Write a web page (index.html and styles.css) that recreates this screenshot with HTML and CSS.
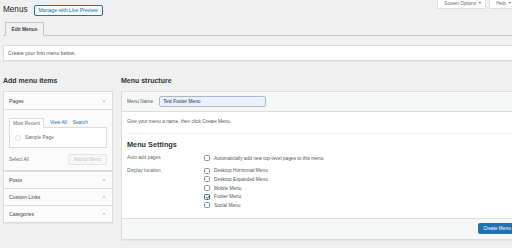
FILE: index.html
```html
<html>
  <head>
    <title>Menus</title>
    <link rel="stylesheet" href="styles.css">
  </head>

  <body>
    <div class="wrap">
      <div class="top">
        <div class="title-row">
          <h1>Menus</h1>
          <a class="btn-outline">Manage with Live Preview</a>
        </div>
        <div class="screen-meta">
          <span class="meta-tab">Screen Options <span class="caret"></span></span>
          <span class="meta-tab">Help <span class="caret"></span></span>
        </div>
      </div>

      <div class="nav-tabs">
        <span class="nav-tab">Edit Menus</span>
      </div>

      <div class="notice">Create your first menu below.</div>

      <div class="columns">
        <div class="col-left">
          <h2 class="col-title">Add menu items</h2>
          <div class="accordion">
            <div class="acc-title">Pages <span class="arrow up"></span></div>
            <div class="acc-content">
              <div class="tabs">
                <span class="tab active">Most Recent</span>
                <span class="tab">View All</span>
                <span class="tab">Search</span>
              </div>
              <div class="tab-panel">
                <span class="cb round"></span>Sample Page
              </div>
              <div class="select-row">
                <span>Select All</span>
                <span class="btn-disabled">Add to Menu</span>
              </div>
            </div>
            <div class="acc-title">Posts <span class="arrow"></span></div>
            <div class="acc-title">Custom Links <span class="arrow"></span></div>
            <div class="acc-title">Categories <span class="arrow"></span></div>
          </div>
        </div>

        <div class="col-right">
          <h2 class="col-title">Menu structure</h2>
          <div class="menu-box">
            <div class="menu-header">
              <span>Menu Name</span>
              <span class="name-input">Test Footer Menu</span>
            </div>
            <div class="menu-body">
              <p class="hint">Give your menu a name, then click Create Menu.</p>
              <h3>Menu Settings</h3>
              <div class="setting">
                <span class="label">Auto add pages</span>
                <div class="options">
                  <div class="opt"><span class="cb"></span>Automatically add new top-level pages to this menu</div>
                </div>
              </div>
              <div class="setting">
                <span class="label">Display location</span>
                <div class="options">
                  <div class="opt"><span class="cb"></span>Desktop Horizontal Menu</div>
                  <div class="opt"><span class="cb"></span>Desktop Expanded Menu</div>
                  <div class="opt"><span class="cb"></span>Mobile Menu</div>
                  <div class="opt"><span class="cb checked"><svg viewBox="0 0 10 10"><path d="M2.2 5.2 L4.2 7.3 L8 2.6" fill="none" stroke="#1d2327" stroke-width="1.3"/></svg></span>Footer Menu</div>
                  <div class="opt"><span class="cb"></span>Social Menu</div>
                </div>
              </div>
            </div>
            <div class="menu-footer">
              <span class="btn-primary">Create Menu</span>
            </div>
          </div>
        </div>
      </div>
    </div>
  </body>
</html>
```

FILE: styles.css
```css
body {
  margin: 0;
  background: #f0f0f1;
  font-family: "Liberation Sans", Arial, sans-serif;
  font-size: 5.2px;
  color: #50575e;
  overflow: hidden;
}

.wrap {
  width: 519px;
  padding-left: 3px;
}

.top {
  display: flex;
  justify-content: space-between;
  align-items: flex-start;
  height: 22px;
}

.title-row {
  display: flex;
  align-items: center;
  gap: 6px;
  padding-top: 4px;
}

h1 {
  margin: 0;
  font-size: 8.2px;
  font-weight: 400;
  color: #1d2327;
  line-height: 12px;
}

.btn-outline {
  display: block;
  height: 9px;
  line-height: 9px;
  padding: 0 4px;
  border: 1px solid #2271b1;
  border-radius: 2px;
  background: #f6f7f7;
  color: #2271b1;
  font-size: 5.1px;
}

.screen-meta {
  display: flex;
  gap: 3px;
  margin-right: 6px;
}

.meta-tab {
  display: block;
  height: 8px;
  line-height: 7px;
  padding: 0 4px 0 6px;
  background: #fff;
  border: 1px solid #dcdcde;
  border-top: none;
  border-radius: 0 0 2px 2px;
  font-size: 4.6px;
  color: #646970;
}

.caret {
  display: inline-block;
  margin-left: 2px;
  vertical-align: 1px;
  border-left: 1.3px solid transparent;
  border-right: 1.3px solid transparent;
  border-top: 2px solid #50575e;
}

.nav-tabs {
  height: 13px;
  padding-left: 2px;
  border-bottom: 1px solid #c3c4c7;
}

.nav-tab {
  display: inline-block;
  box-sizing: border-box;
  height: 14px;
  line-height: 13px;
  width: 39px;
  text-align: center;
  background: #f0f0f1;
  border: 1px solid #c3c4c7;
  border-bottom-color: #f0f0f1;
  font-weight: 600;
  font-size: 4.9px;
  color: #3c434a;
}

.notice {
  margin-top: 9px;
  height: 14px;
  line-height: 14px;
  padding-left: 4px;
  background: #fff;
  border: 1px solid #dcdcde;
  box-shadow: 0 1px 1px rgba(0, 0, 0, 0.04);
}

.columns {
  display: flex;
  gap: 8px;
  margin-top: 14px;
}

.col-left {
  width: 110px;
  flex-shrink: 0;
}

.col-right {
  flex-grow: 1;
}

.col-title {
  margin: 0;
  height: 16px;
  line-height: 11px;
  font-size: 7px;
  font-weight: 600;
  color: #2c3338;
}

.accordion {
  border: 1px solid #dcdcde;
  background: #fbfbfb;
  box-shadow: 0 1px 1px rgba(0, 0, 0, 0.04);
}

.acc-title {
  display: flex;
  justify-content: space-between;
  align-items: center;
  height: 16px;
  padding: 0 5px;
  border-top: 1px solid #dcdcde;
  color: #3c434a;
  font-size: 5.2px;
}

.acc-title:first-child {
  border-top: none;
  height: 17px;
  border-bottom: 1px solid #dcdcde;
}

.arrow {
  border-left: 1.4px solid transparent;
  border-right: 1.4px solid transparent;
  border-top: 2px solid #a7aaad;
  margin-right: 2px;
}

.arrow.up {
  border-top: none;
  border-bottom: 2px solid #a7aaad;
}

.acc-content {
  padding: 8px 5px 0;
  border-bottom: 1px solid #dcdcde;
}

.tabs {
  display: flex;
  gap: 6px;
  height: 9px;
  font-size: 4.8px;
}

.tab {
  line-height: 9px;
  color: #2271b1;
}

.tab.active {
  box-sizing: border-box;
  height: 10px;
  width: 35px;
  text-align: center;
  border: 1px solid #dcdcde;
  border-bottom-color: #fff;
  background: #fff;
  color: #646970;
}

.tab-panel {
  display: flex;
  align-items: center;
  height: 19px;
  padding: 0 0 0 5px;
  border: 1px solid #dcdcde;
  background: #fff;
  color: #646970;
  font-size: 4.8px;
}

.cb {
  display: inline-block;
  box-sizing: border-box;
  width: 6px;
  height: 6px;
  margin-right: 4px;
  border: 1px solid #8c8f94;
  border-radius: 1.5px;
  background: #fff;
  flex-shrink: 0;
}

.cb.round {
  border-color: #dcdcde;
  border-radius: 3px;
}

.cb.checked {
  border-color: #2271b1;
  position: relative;
}

.cb svg {
  position: absolute;
  left: -0.5px;
  top: -1px;
  width: 6px;
  height: 6px;
}

.select-row {
  display: flex;
  justify-content: space-between;
  align-items: center;
  height: 22px;
  color: #646970;
  font-size: 4.8px;
}

.btn-disabled {
  box-sizing: border-box;
  width: 39px;
  height: 11px;
  line-height: 9px;
  text-align: center;
  border: 1px solid #e4e4e6;
  border-radius: 2px;
  background: #f6f7f7;
  color: #c3c4c7;
}

.menu-box {
  border: 1px solid #dcdcde;
  background: #fff;
  box-shadow: 0 1px 1px rgba(0, 0, 0, 0.04);
}

.menu-header {
  display: flex;
  align-items: center;
  gap: 6px;
  height: 19px;
  padding: 0 5px;
  background: #f6f7f7;
  border-bottom: 1px solid #dcdcde;
  font-size: 4.8px;
}

.name-input {
  box-sizing: border-box;
  width: 107px;
  height: 11px;
  line-height: 9px;
  padding-left: 3px;
  background: #e8f0fe;
  border: 1px solid #b4b8bd;
  border-radius: 2px;
  color: #2c3338;
}

.menu-body {
  padding: 0 5px 8px;
}

.hint {
  margin: 0;
  height: 21px;
  line-height: 20px;
  border-bottom: 1px solid #f0f0f1;
  font-size: 4.8px;
}

h3 {
  margin: 0;
  height: 16px;
  line-height: 22px;
  font-size: 7.3px;
  font-weight: 600;
  color: #2c3338;
}

.setting {
  display: flex;
  margin-top: 4px;
}

.label {
  width: 77px;
  flex-shrink: 0;
  line-height: 8.6px;
  font-size: 4.8px;
  color: #646970;
}

.options {
  font-size: 4.8px;
}

.opt {
  display: flex;
  align-items: center;
  height: 8.6px;
}

.menu-footer {
  display: flex;
  justify-content: flex-end;
  align-items: center;
  height: 20px;
  padding-right: 5px;
  background: #f6f7f7;
  border-top: 1px solid #dcdcde;
}

.btn-primary {
  box-sizing: border-box;
  height: 11px;
  line-height: 11px;
  width: 38px;
  text-align: center;
  background: #2271b1;
  border-radius: 2px;
  color: #fff;
  font-size: 4.8px;
}
```
